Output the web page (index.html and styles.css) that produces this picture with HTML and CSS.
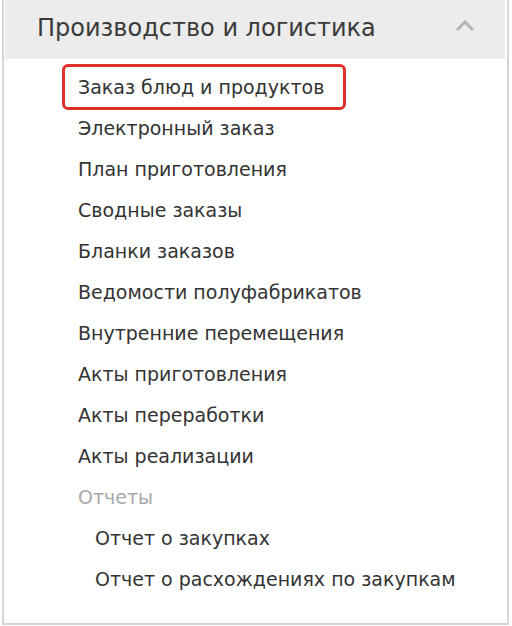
FILE: index.html
```html
<!DOCTYPE html>
<html lang="ru">
	<head>
		<meta charset="utf-8">
		<title>Производство и логистика</title>
		<link rel="stylesheet" href="styles.css">
	</head>
	<body>
		<div class="panel">
			<div class="panel-head">
				<span class="panel-title">Производство и логистика</span>
				<svg class="chevron" width="20" height="13" viewBox="0 0 20 13">
					<path d="M2 11 L10 3 L18 11" fill="none" stroke="#b4b4b4" stroke-width="3"/>
				</svg>
			</div>
			<ul class="menu">
				<li><a class="marked" href="#">Заказ блюд и продуктов</a></li>
				<li><a href="#">Электронный заказ</a></li>
				<li><a href="#">План приготовления</a></li>
				<li><a href="#">Сводные заказы</a></li>
				<li><a href="#">Бланки заказов</a></li>
				<li><a href="#">Ведомости полуфабрикатов</a></li>
				<li><a href="#">Внутренние перемещения</a></li>
				<li><a href="#">Акты приготовления</a></li>
				<li><a href="#">Акты переработки</a></li>
				<li><a href="#">Акты реализации</a></li>
				<li class="group">Отчеты</li>
				<li class="sub"><a href="#">Отчет о закупках</a></li>
				<li class="sub"><a href="#">Отчет о расхождениях по закупкам</a></li>
			</ul>
		</div>
	</body>
</html>
```

FILE: styles.css
```css
* {
	margin: 0;
	padding: 0;
}

body {
	font-family: "DejaVu Sans", sans-serif;
	color: #333;
	background: #fff;
}

ul {
	list-style: none;
}

.panel {
	width: 507px;
	height: 625px;
	margin-left: 2px;
	box-sizing: border-box;
	border: 2px solid #d6d6d6;
	border-top: none;
	padding: 0 2px 0 1px;
}

.panel-head {
	height: 59px;
	background-color: #ececec;
	display: flex;
	align-items: center;
	justify-content: space-between;
	padding: 0 30px 0 32px;
}

.panel-title {
	font-size: 24px;
	color: #3a3a3a;
	margin-top: -4px;
}

.chevron {
	margin-top: -8px;
}

.menu {
	padding-top: 8px;
}

.menu li {
	height: 41px;
	line-height: 41px;
	font-size: 19px;
	padding-left: 73px;
}

.menu a {
	color: #333;
	text-decoration: none;
}

.menu .group {
	color: #a8a8a8;
}

.menu .sub {
	padding-left: 90px;
}

.marked {
	position: relative;
}

.marked::after {
	content: "";
	position: absolute;
	left: -16px;
	right: -22px;
	top: -12px;
	bottom: -12px;
	border: 3px solid #e0302a;
	border-radius: 6px;
}
```
